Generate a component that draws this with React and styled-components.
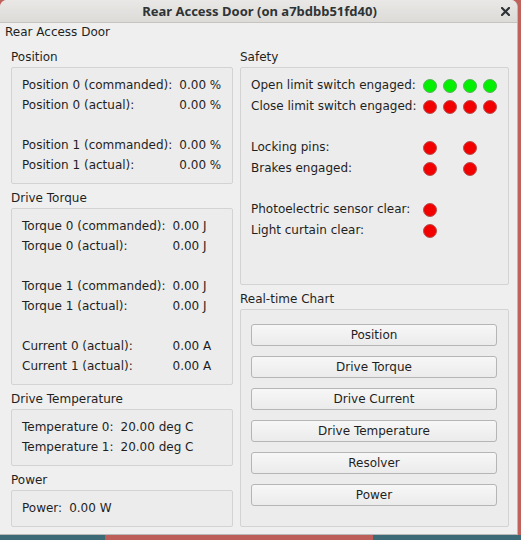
import React from "react";
import styled, { createGlobalStyle } from "styled-components";

const GlobalStyle = createGlobalStyle`
  html, body {
    margin: 0;
    padding: 0;
  }
  body {
    width: 521px;
    height: 540px;
    overflow: hidden;
    background:
      linear-gradient(to right, #3c6b77 105px, #bd5e58 105px 373px, #3c6b77 373px)
        bottom / 100% 5px no-repeat,
      #c0625c;
    font-family: "DejaVu Sans", "Liberation Sans", sans-serif;
    font-size: 12px;
    color: #1f1f1f;
  }
`;

const positionRows = [
  ["Position 0 (commanded):", "0.00 %"],
  ["Position 0 (actual):", "0.00 %"],
  null,
  ["Position 1 (commanded):", "0.00 %"],
  ["Position 1 (actual):", "0.00 %"],
];

const torqueRows = [
  ["Torque 0 (commanded):", "0.00 J"],
  ["Torque 0 (actual):", "0.00 J"],
  null,
  ["Torque 1 (commanded):", "0.00 J"],
  ["Torque 1 (actual):", "0.00 J"],
  null,
  ["Current 0 (actual):", "0.00 A"],
  ["Current 1 (actual):", "0.00 A"],
];

const temperatureRows = [
  ["Temperature 0:", "20.00 deg C"],
  ["Temperature 1:", "20.00 deg C"],
];

const powerRows = [["Power:", "0.00 W"]];

// each lamp: null = empty cell, true = green, false = red
const safetyRows = [
  ["Open limit switch engaged:", [true, true, true, true]],
  ["Close limit switch engaged:", [false, false, false, false]],
  null,
  ["Locking pins:", [false, null, false, null]],
  ["Brakes engaged:", [false, null, false, null]],
  null,
  ["Photoelectric sensor clear:", [false, null, null, null]],
  ["Light curtain clear:", [false, null, null, null]],
];

const chartButtons = [
  "Position",
  "Drive Torque",
  "Drive Current",
  "Drive Temperature",
  "Resolver",
  "Power",
];

const ValueGrid = ({ rows }) => (
  <KeyValues>
    {rows.map((row, i) =>
      row ? (
        <React.Fragment key={i}>
          <span>{row[0]}</span>
          <span>{row[1]}</span>
        </React.Fragment>
      ) : (
        <Spacer key={i} />
      )
    )}
  </KeyValues>
);

const Section = ({ title, grow, children }) => (
  <SectionWrap $grow={grow}>
    <SectionLabel>{title}</SectionLabel>
    <GroupBox $grow={grow}>{children}</GroupBox>
  </SectionWrap>
);

const App = () => {
  return (
    <>
      <GlobalStyle />
      <Window>
        <TitleBar>
          <span />
          <Title>Rear Access Door (on a7bdbb51fd40)</Title>
          <CloseButton aria-label="Close">
            <svg width="9" height="9" viewBox="0 0 9 9">
              <path
                d="M1 1 L8 8 M8 1 L1 8"
                stroke="#2e3436"
                strokeWidth="2.2"
                strokeLinecap="square"
              />
            </svg>
          </CloseButton>
        </TitleBar>
        <Body>
          <Heading>Rear Access Door</Heading>
          <Columns>
            <Column>
              <Section title="Position">
                <ValueGrid rows={positionRows} />
              </Section>
              <Section title="Drive Torque">
                <ValueGrid rows={torqueRows} />
              </Section>
              <Section title="Drive Temperature">
                <ValueGrid rows={temperatureRows} />
              </Section>
              <Section title="Power">
                <ValueGrid rows={powerRows} />
              </Section>
            </Column>
            <Column>
              <Section title="Safety" grow>
                <LampGrid>
                  {safetyRows.map((row, i) =>
                    row ? (
                      <LampRow key={i}>
                        <LampLabel>{row[0]}</LampLabel>
                        {row[1].map((lamp, j) => (
                          <LampCell key={j}>
                            {lamp !== null && <Lamp $on={lamp} />}
                          </LampCell>
                        ))}
                      </LampRow>
                    ) : (
                      <LampSpacer key={i} />
                    )
                  )}
                </LampGrid>
              </Section>
              <Section title="Real-time Chart" grow>
                <ButtonStack>
                  {chartButtons.map((label) => (
                    <PushButton key={label}>{label}</PushButton>
                  ))}
                </ButtonStack>
              </Section>
            </Column>
          </Columns>
        </Body>
      </Window>
    </>
  );
};

export default App;

const Window = styled.div`
  width: 518px;
  height: 535px;
  box-sizing: border-box;
  display: flex;
  flex-direction: column;
  border-radius: 7px 7px 0 0;
  overflow: hidden;
  border-right: 1px solid #b9b9b9;
  border-bottom: 1px solid #b9b9b9;
  background: #efefef;
`;

const TitleBar = styled.div`
  height: 22px;
  flex: none;
  display: grid;
  grid-template-columns: 1fr auto 1fr;
  align-items: center;
  background: linear-gradient(to bottom, #e9e8e6, #dddbd8);
  border-bottom: 1px solid #c6c4c1;
`;

const Title = styled.span`
  font-family: "Noto Sans", "DejaVu Sans", sans-serif;
  font-weight: 700;
  font-size: 13px;
  color: #2e3436;
  padding-left: 2px;
`;

const CloseButton = styled.span`
  justify-self: end;
  display: flex;
  align-items: center;
  padding-right: 7px;
`;

const Body = styled.div`
  flex: 1;
  display: flex;
  flex-direction: column;
  padding: 1px 9px 8px 11px;
`;

const Heading = styled.div`
  line-height: 17px;
  margin-left: -6px;
`;

const Columns = styled.div`
  flex: 1;
  margin-top: 8px;
  display: grid;
  grid-template-columns: 222px 269px;
  column-gap: 7px;
`;

const Column = styled.div`
  display: flex;
  flex-direction: column;
  gap: 6px;
`;

const SectionWrap = styled.div`
  display: flex;
  flex-direction: column;
  flex: ${(p) => (p.$grow ? 1 : "none")};
`;

const SectionLabel = styled.div`
  line-height: 17px;
  margin-bottom: 1px;
`;

const GroupBox = styled.div`
  flex: ${(p) => (p.$grow ? 1 : "none")};
  border: 1px solid #d3d3d3;
  border-radius: 2px;
  background: #ececec;
  padding: 7px 10px 8px;
`;

const KeyValues = styled.div`
  display: grid;
  grid-template-columns: max-content max-content;
  column-gap: 7px;
  line-height: 20px;
  white-space: nowrap;
`;

const Spacer = styled.div`
  grid-column: 1 / -1;
  height: 20px;
`;

const LampGrid = styled.div`
  display: grid;
  grid-template-columns: max-content repeat(4, 20px);
  align-items: center;
  white-space: nowrap;
`;

const LampRow = styled.div`
  display: contents;
`;

const LampLabel = styled.span`
  height: 21px;
  line-height: 21px;
  padding-right: 4px;
`;

const LampCell = styled.span`
  display: flex;
  justify-content: center;
  align-items: center;
`;

const LampSpacer = styled.div`
  grid-column: 1 / -1;
  height: 20px;
`;

const Lamp = styled.span`
  width: 14px;
  height: 14px;
  box-sizing: border-box;
  border-radius: 50%;
  background: ${(p) => (p.$on ? "#00f000" : "#f20000")};
  border: 1px solid ${(p) => (p.$on ? "#5bb35b" : "#b85050")};
`;

const ButtonStack = styled.div`
  display: flex;
  flex-direction: column;
  gap: 10px;
  padding: 7px 1px 0 0;
`;

const PushButton = styled.button`
  height: 22px;
  box-sizing: border-box;
  font-family: inherit;
  font-size: 12px;
  color: #1f1f1f;
  border: 1px solid #b5b5b5;
  border-radius: 3px;
  background: linear-gradient(to bottom, #f7f7f7, #ebebeb);
  padding: 0;
`;
